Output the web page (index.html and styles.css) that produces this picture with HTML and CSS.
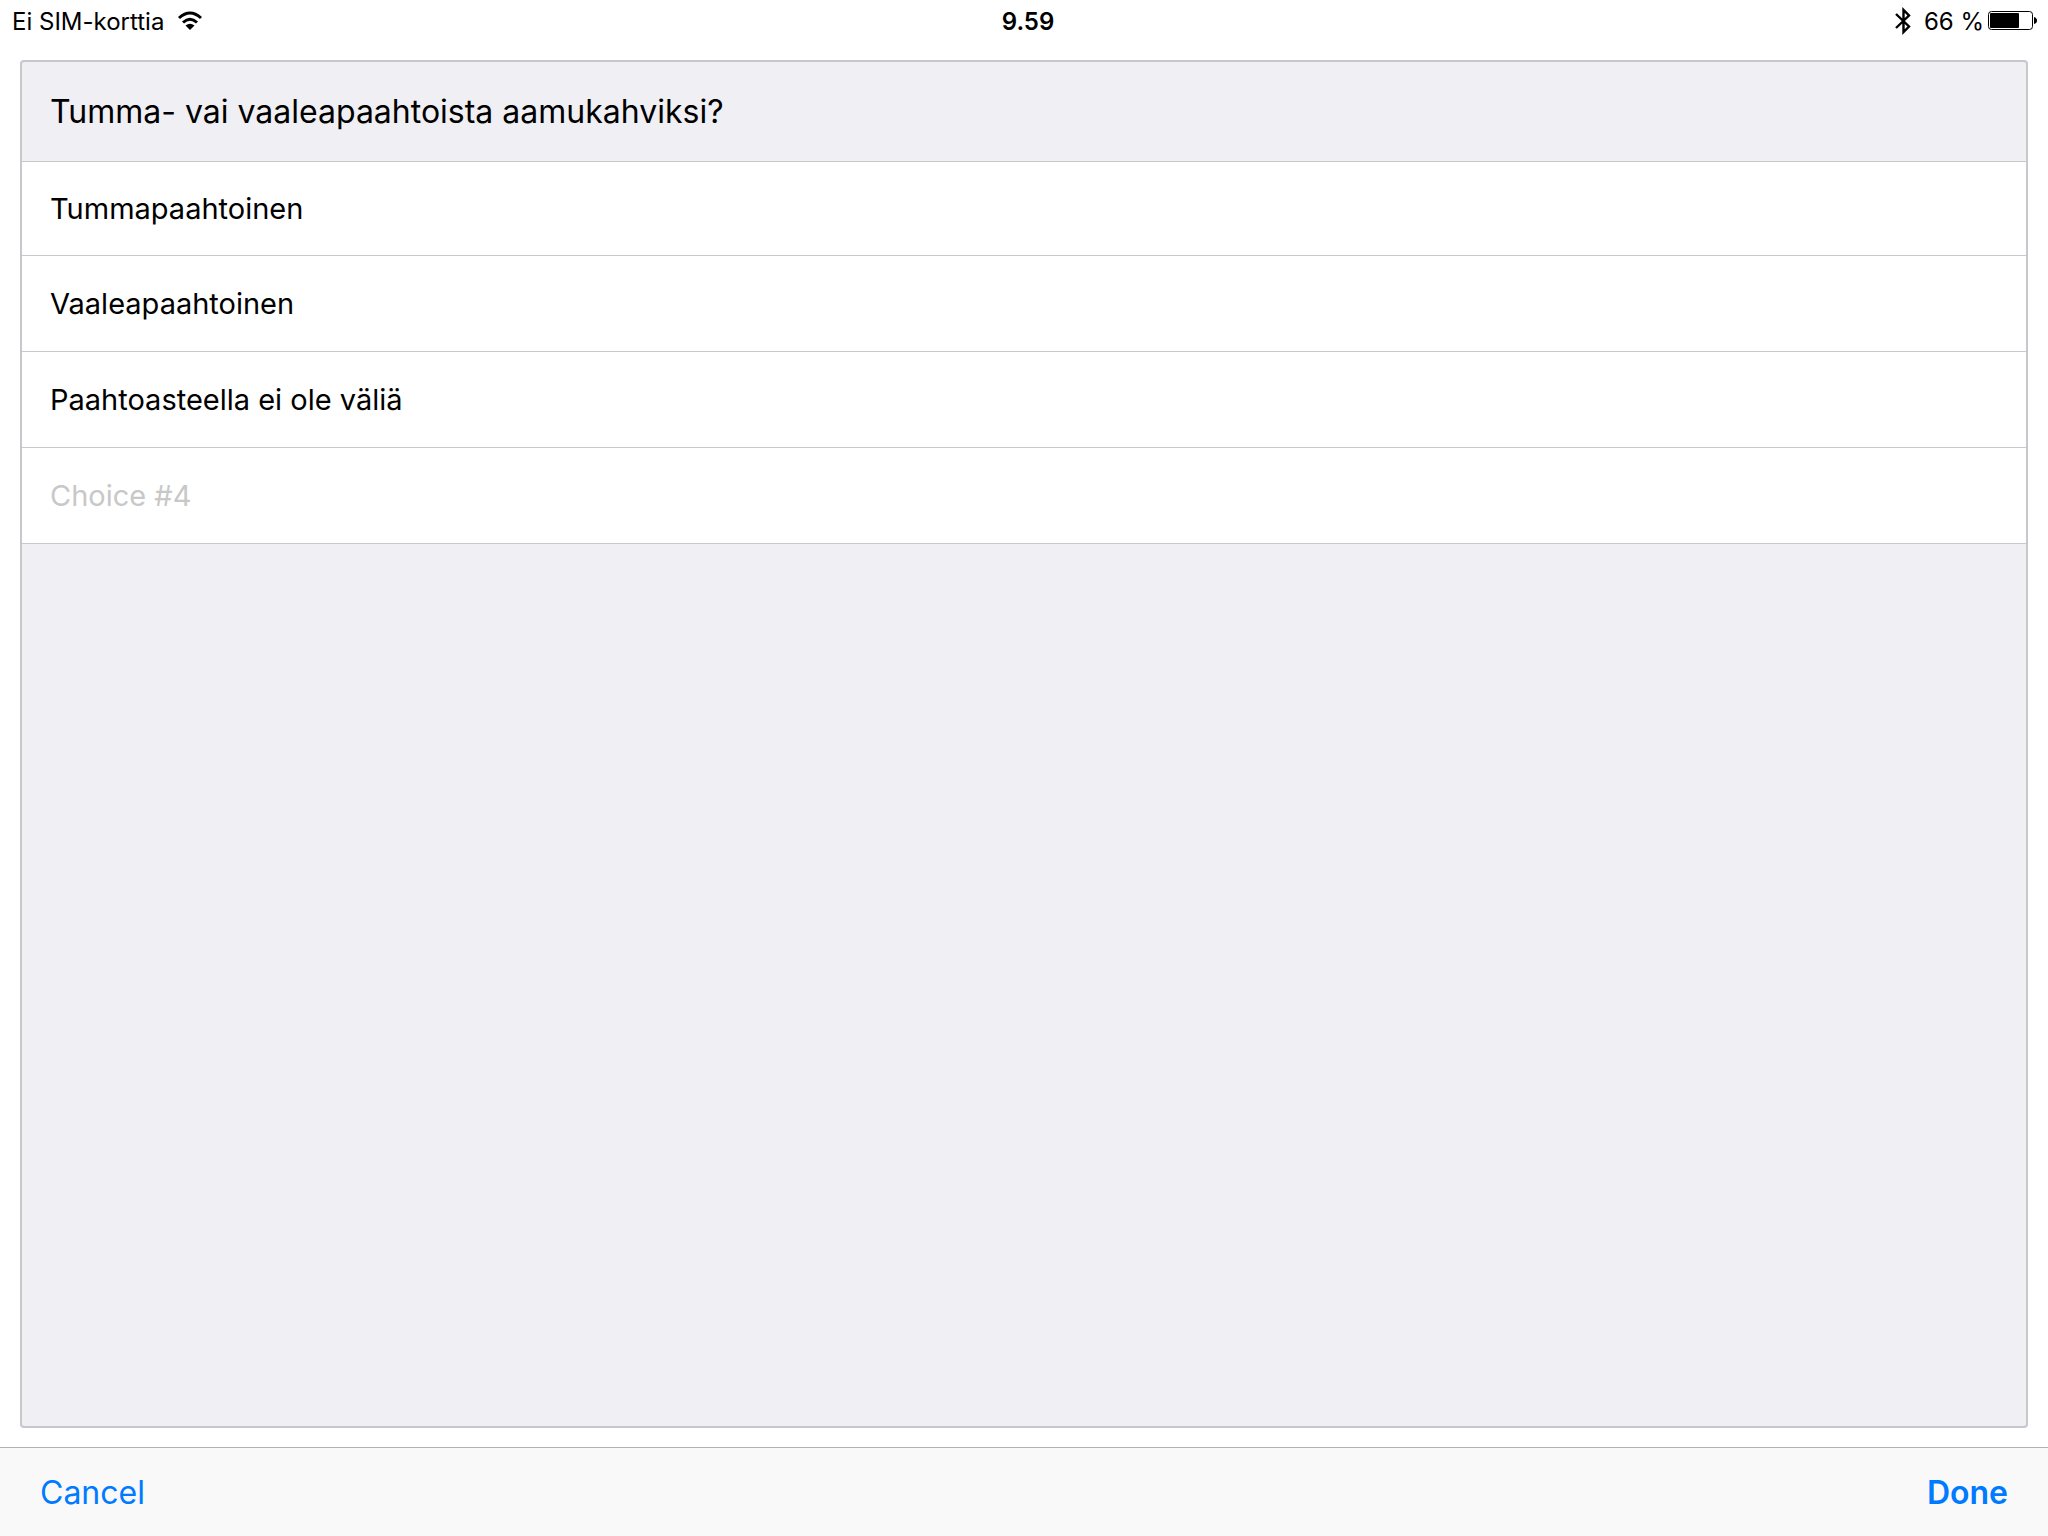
FILE: index.html
```html
<!DOCTYPE html>
<html lang="fi">

<head>
    <meta charset="UTF-8">
    <meta name="viewport" content="width=device-width, initial-scale=1.0">
    <title>Poll</title>
    <link rel="stylesheet" href="styles.css">
</head>

<body>
    <header class="status-bar">
        <div class="status-left">
            <span>Ei SIM-korttia</span>
            <svg class="wifi" width="26" height="20" viewBox="0 0 26 20" aria-hidden="true">
                <path d="M2 7 Q13 -3 24 7" fill="none" stroke="#000" stroke-width="3" />
                <path d="M6 11.500 Q13 5 20 11.500" fill="none" stroke="#000" stroke-width="3" />
                <path d="M8.500 14.500 Q13 11 17.500 14.500 L13 19 Z" fill="#000" />
            </svg>
        </div>
        <div class="status-time">9.59</div>
        <div class="status-right">
            <svg class="bluetooth" width="16" height="28" viewBox="0 0 16 28" aria-hidden="true">
                <path d="M1 7 L14 19.500 L8.500 25 V3 L14 8.500 L1 21" fill="none" stroke="#000" stroke-width="2.400" />
            </svg>
            <span>66 %</span>
            <svg class="battery" width="50" height="20" viewBox="0 0 50 20" aria-hidden="true">
                <rect x="0.5" y="0.5" width="44" height="18" rx="3" fill="#fff" stroke="#000" />
                <rect x="2" y="2" width="29" height="15" rx="1" fill="#000" />
                <path d="M46 6 Q49 7 49 9.500 Q49 12 46 13 Z" fill="#000" />
            </svg>
        </div>
    </header>

    <form class="poll" id="poll">
        <input class="question" type="text" aria-label="Question" value="Tumma- vai vaaleapaahtoista aamukahviksi?">
        <input class="choice" type="text" aria-label="Choice #1" value="Tummapaahtoinen">
        <input class="choice" type="text" aria-label="Choice #2" value="Vaaleapaahtoinen">
        <input class="choice" type="text" aria-label="Choice #3" value="Paahtoasteella ei ole väliä">
        <input class="choice" type="text" aria-label="Choice #4" placeholder="Choice #4">
    </form>

    <footer class="toolbar">
        <button class="cancel" type="button">Cancel</button>
        <button class="done" type="submit" form="poll">Done</button>
    </footer>
</body>

</html>
```
FILE: styles.css
```css
* {
    box-sizing: border-box;
}

body {
    margin: 0;
    min-height: 100vh;
    display: flex;
    flex-direction: column;
    background-color: #fff;
    color: #000;
    font-family: Inter, "Liberation Sans", sans-serif;
}

.status-bar {
    display: grid;
    grid-template-columns: 1fr auto 1fr;
    align-items: center;
    height: 42px;
    padding: 0 10px 0 12px;
    font-size: 24px;
}

.status-left,
.status-right {
    display: flex;
    align-items: center;
}

.status-left {
    gap: 13px;
}

.status-right {
    justify-content: flex-end;
}

.status-time {
    padding-left: 6px;
    font-weight: 600;
}

.bluetooth {
    margin-right: 13px;
}

.battery {
    margin-left: 4px;
}

.poll {
    flex: 1;
    display: flex;
    flex-direction: column;
    margin: 18px 20px 19px;
    border: 2px solid #c7c7cc;
    border-radius: 4px;
    background-color: #efeff4;
    overflow: hidden;
}

.question,
.choice {
    width: 100%;
    height: 96px;
    margin: 0;
    padding: 0 28px;
    border: 0;
    border-bottom: 1px solid #c7c7cc;
    border-radius: 0;
    outline: 0;
    background-color: #fff;
    color: #000;
    font-family: inherit;
    font-size: 29px;
}

.question {
    height: 100px;
    background-color: transparent;
    font-size: 32px;
}

.question + .choice {
    height: 94px;
}

.choice::placeholder {
    color: #c8c8c8;
    opacity: 1;
}

.toolbar {
    display: flex;
    justify-content: space-between;
    align-items: center;
    height: 89px;
    padding: 0 40px;
    border-top: 1px solid #b2b2b2;
    background-color: #f9f9f9;
}

.toolbar button {
    padding: 0;
    border: 0;
    background: none;
    color: #007aff;
    font-family: inherit;
    font-size: 32px;
    cursor: pointer;
}

.toolbar .done {
    font-weight: 600;
}
```
